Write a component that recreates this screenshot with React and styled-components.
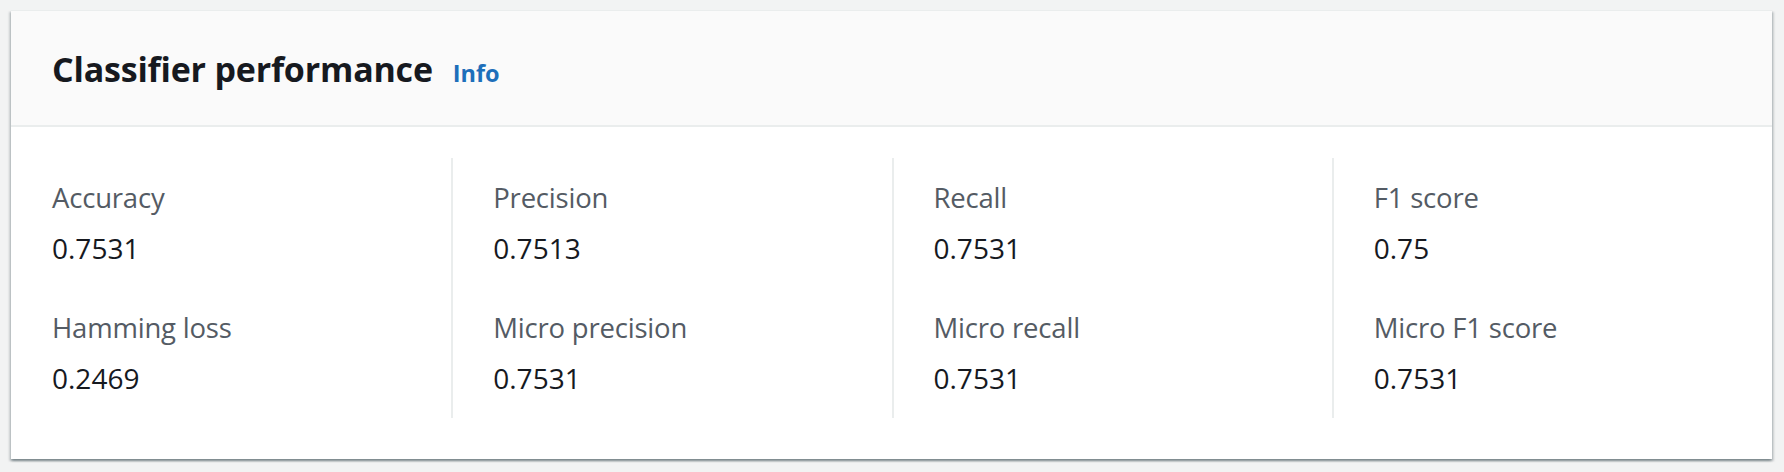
import React from 'react';
import styled, {createGlobalStyle} from 'styled-components';

const GlobalStyle = createGlobalStyle`
  html, body {
    margin: 0;
    padding: 0;
    background: #f2f3f3;
  }
  body {
    font-family: "Open Sans", "Noto Sans", Arial, sans-serif;
    -webkit-font-smoothing: antialiased;
  }
`;

const metrics = [
  [
    {label: 'Accuracy', value: '0.7531'},
    {label: 'Hamming loss', value: '0.2469'},
  ],
  [
    {label: 'Precision', value: '0.7513'},
    {label: 'Micro precision', value: '0.7531'},
  ],
  [
    {label: 'Recall', value: '0.7531'},
    {label: 'Micro recall', value: '0.7531'},
  ],
  [
    {label: 'F1 score', value: '0.75'},
    {label: 'Micro F1 score', value: '0.7531'},
  ],
];

const Page = styled.div`
  padding: 10px 12px 0 11px;
  height: 472px;
  box-sizing: border-box;
`;

const Card = styled.section`
  background: #ffffff;
  border-top: 1px solid #eaeded;
  box-shadow: 0 2px 2px 0 rgba(0, 28, 36, 0.3),
    2px 2px 2px 0 rgba(0, 28, 36, 0.15),
    -2px 2px 2px 0 rgba(0, 28, 36, 0.15);
`;

const Header = styled.header`
  display: flex;
  align-items: baseline;
  background: #fafafa;
  border-bottom: 2px solid #eaeded;
  padding: 36px 41px 34px;
`;

const Title = styled.h2`
  margin: 0;
  font-size: 34px;
  line-height: 44px;
  font-weight: 700;
  color: #16191f;
  letter-spacing: -0.2px;
`;

const InfoLink = styled.a`
  margin-left: 20px;
  font-size: 23.5px;
  font-weight: 700;
  color: #1d6fba;
  text-decoration: none;
  cursor: pointer;
`;

const Body = styled.div`
  display: grid;
  grid-template-columns: repeat(4, 1fr);
  padding: 31px 0 41px;
`;

const Column = styled.div`
  display: flex;
  flex-direction: column;
  gap: 40px;
  padding: 20px 0 20px ${p => (p.$first ? '41px' : '40px')};
  border-left: ${p => (p.$first ? 'none' : '2px solid #eaeded')};
`;

const Pair = styled.div`
  display: flex;
  flex-direction: column;
  gap: 10px;
`;

const Label = styled.div`
  font-size: 27.5px;
  line-height: 40px;
  letter-spacing: -0.2px;
  color: #545b64;
`;

const Value = styled.div`
  font-size: 28px;
  line-height: 40px;
  color: #16191f;
`;

function App() {
  return (
    <Page>
      <GlobalStyle />
      <Card>
        <Header>
          <Title>Classifier performance</Title>
          <InfoLink>Info</InfoLink>
        </Header>
        <Body>
          {metrics.map((col, i) => (
            <Column key={i} $first={i === 0}>
              {col.map(m => (
                <Pair key={m.label}>
                  <Label>{m.label}</Label>
                  <Value>{m.value}</Value>
                </Pair>
              ))}
            </Column>
          ))}
        </Body>
      </Card>
    </Page>
  );
}

export default App;
